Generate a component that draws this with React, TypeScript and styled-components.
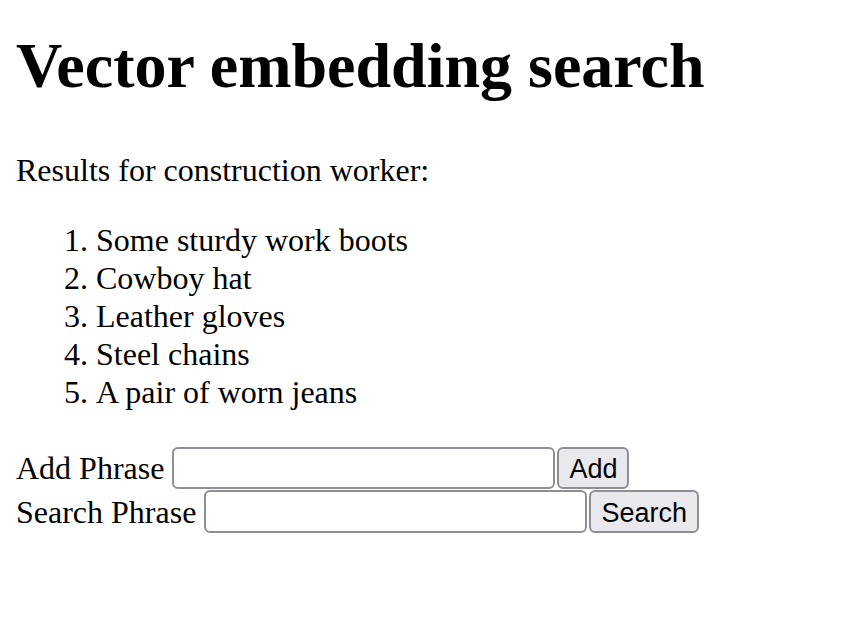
import styled, { createGlobalStyle } from 'styled-components';

const GlobalStyle = createGlobalStyle`
    body {
        margin: 0;
        background: #ffffff;
        color: #000000;
        font-family: "Liberation Serif", "Times New Roman", serif;
    }
`;

const Page = styled.main`
    padding: 0 16px;
    font-size: 32px;
    line-height: 38px;
`;

const Title = styled.h1`
    margin: 28px 0 47px;
    font-size: 64px;
    line-height: 76px;
    font-weight: bold;
`;

const Intro = styled.p`
    margin: 0 0 32px;
`;

const Results = styled.ol`
    margin: 0;
    padding-left: 80px;
`;

const PhraseForm = styled.form`
    display: flex;
    flex-direction: column;
    gap: 1px;
    margin-top: 36px;
`;

const Row = styled.div`
    display: flex;
    align-items: center;
    gap: 8px;
`;

const Field = styled.input<{ $tall?: boolean }>`
    box-sizing: border-box;
    width: 383px;
    height: ${p => (p.$tall ? 43 : 42)}px;
    margin: 0;
    padding: 0 6px;
    border: 2px solid #8f8e97;
    border-radius: 6px;
    background: #ffffff;
    font: 27px "Liberation Sans", Arial, sans-serif;
`;

const Button = styled.button<{ $tall?: boolean }>`
    box-sizing: border-box;
    height: ${p => (p.$tall ? 43 : 42)}px;
    margin-left: -6px;
    padding: 3px 10px 0;
    border: 2px solid #8f8e97;
    border-radius: 6px;
    background: #e9e9ed;
    color: #000000;
    font: 27px "Liberation Sans", Arial, sans-serif;
`;

const results = [
    'Some sturdy work boots',
    'Cowboy hat',
    'Leather gloves',
    'Steel chains',
    'A pair of worn jeans',
];

export default function App() {
    return (
        <>
            <GlobalStyle />
            <Page>
                <Title>Vector embedding search</Title>
                <Intro>Results for construction worker:</Intro>
                <Results>
                    {results.map(item => (
                        <li key={item}>{item}</li>
                    ))}
                </Results>
                <PhraseForm onSubmit={e => e.preventDefault()}>
                    <Row>
                        <span>Add Phrase</span>
                        <Field type="text" />
                        <Button type="button">Add</Button>
                    </Row>
                    <Row>
                        <span>Search Phrase</span>
                        <Field type="text" $tall />
                        <Button type="button" $tall>Search</Button>
                    </Row>
                </PhraseForm>
            </Page>
        </>
    );
}
